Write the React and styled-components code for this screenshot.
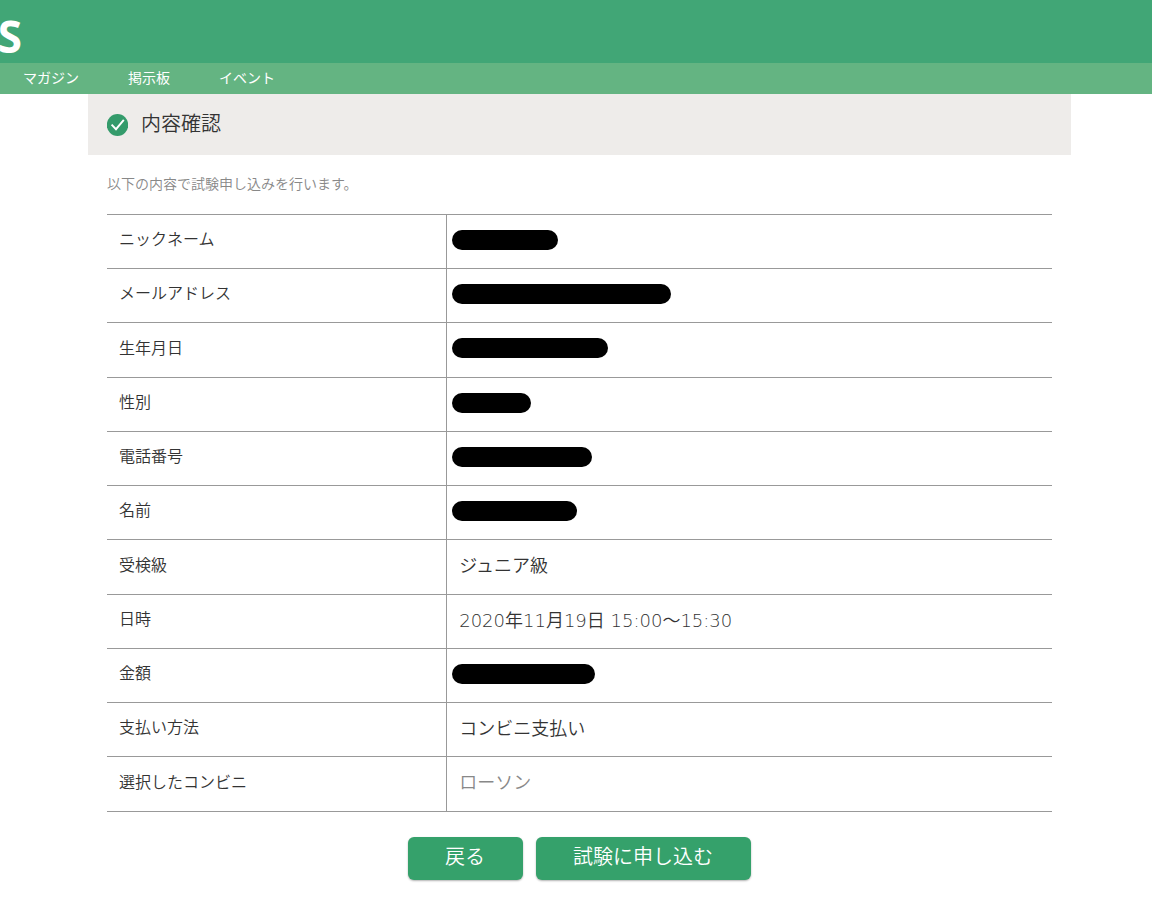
import React from 'react';
import styled, { createGlobalStyle } from 'styled-components';

const GlobalStyle = createGlobalStyle`
    * {
        box-sizing: border-box;
    }
    body {
        margin: 0;
        background: #fff;
        color: #333;
        font-family: 'Noto Sans CJK JP', sans-serif;
        font-weight: 350;
    }
`;

const Header = styled.header`
    height: 63px;
    padding-top: 12px;
    background: #41a676;
`;

const Logo = styled.a`
    display: flex;
    justify-content: flex-end;
    width: 22px;
    color: #fff;
    font: bold 44px/48px 'Open Sans', 'Noto Sans', sans-serif;
    text-decoration: none;
`;

const Nav = styled.nav`
    display: flex;
    align-items: center;
    gap: 49px;
    height: 31px;
    padding: 0 23px 4px;
    background: #64b482;
`;

const NavLink = styled.a`
    color: #fff;
    font-size: 14px;
    line-height: 24px;
    font-weight: 400;
    text-decoration: none;
`;

const Main = styled.main`
    margin: 0 81px 0 88px;
`;

const TitleBar = styled.div`
    display: flex;
    align-items: center;
    gap: 13px;
    height: 61px;
    padding: 0 19px;
    background: #eeecea;
`;

const Title = styled.h1`
    margin: 0;
    padding-bottom: 4px;
    font-size: 20px;
    line-height: 28px;
    font-weight: 350;
`;

const Content = styled.div`
    padding: 17px 19px 40px;
`;

const Lead = styled.p`
    margin: 0 0 20px;
    color: #888;
    font-size: 14px;
    line-height: 22px;
`;

const Table = styled.table`
    width: 100%;
    table-layout: fixed;
    border-spacing: 0;
    border-top: 1px solid #999;
`;

const Row = styled.tr`
    height: 54px;

    &:nth-child(4n + 3) {
        height: 55px;
    }
`;

const Label = styled.th`
    width: 36%;
    padding: 0 12px 7px;
    border-right: 1px solid #999;
    border-bottom: 1px solid #999;
    font-size: 16px;
    line-height: 24px;
    font-weight: 350;
    text-align: left;
`;

const Value = styled.td`
    padding: ${(props) => (props.$masked ? '0 5px 4px' : '0 12px 2px')};
    border-bottom: 1px solid #999;
    color: ${(props) => (props.$muted ? '#888' : '#333')};
    font-family: 'DejaVu Sans Light', 'Noto Sans CJK JP', sans-serif;
    font-size: 18px;
    line-height: 26px;
`;

const Mask = styled.div`
    height: 20px;
    border-radius: 10px;
    background: #000;
`;

const Actions = styled.div`
    display: flex;
    justify-content: center;
    gap: 13px;
    margin-top: 25px;
`;

const Button = styled.button`
    height: 43px;
    padding: 0 38px 5px 37px;
    border: 0;
    border-radius: 6px;
    background: #35a16b;
    box-shadow: 0 1px 2px rgba(0, 0, 0, 0.3);
    color: #fff;
    font: inherit;
    font-size: 20px;
    line-height: 28px;
    cursor: pointer;
`;

const links = ['マガジン', '掲示板', 'イベント'];

// rows with a mask hide personal data behind a bar of that width
const rows = [
    { label: 'ニックネーム', mask: 106 },
    { label: 'メールアドレス', mask: 219 },
    { label: '生年月日', mask: 156 },
    { label: '性別', mask: 79 },
    { label: '電話番号', mask: 140 },
    { label: '名前', mask: 125 },
    { label: '受検級', value: 'ジュニア級' },
    { label: '日時', value: '2020年11月19日 15:00～15:30' },
    { label: '金額', mask: 143 },
    { label: '支払い方法', value: 'コンビニ支払い' },
    { label: '選択したコンビニ', value: 'ローソン', muted: true },
];

const CheckIcon = () => (
    <svg width="21" height="22" viewBox="0 0 21 22" aria-hidden="true">
        <ellipse cx="10.5" cy="11" rx="10.7" ry="11" fill="#349b6b" />
        <path
            d="M4.6 10.6l4.4 4.6 7.8-9.4"
            fill="none"
            stroke="#fff"
            strokeWidth="1.9"
        />
    </svg>
);

const App = () => {
    return (
        <>
            <GlobalStyle />
            <Header>
                <Logo href="#">S</Logo>
            </Header>
            <Nav>
                {links.map((link) => (
                    <NavLink key={link} href="#">
                        {link}
                    </NavLink>
                ))}
            </Nav>
            <Main>
                <TitleBar>
                    <CheckIcon />
                    <Title>内容確認</Title>
                </TitleBar>
                <Content>
                    <Lead>以下の内容で試験申し込みを行います。</Lead>
                    <Table>
                        <tbody>
                            {rows.map((row) => (
                                <Row key={row.label}>
                                    <Label scope="row">{row.label}</Label>
                                    <Value $masked={!!row.mask} $muted={row.muted}>
                                        {row.mask ? (
                                            <Mask style={{ width: row.mask }} />
                                        ) : (
                                            row.value
                                        )}
                                    </Value>
                                </Row>
                            ))}
                        </tbody>
                    </Table>
                    <Actions>
                        <Button type="button">戻る</Button>
                        <Button type="submit">試験に申し込む</Button>
                    </Actions>
                </Content>
            </Main>
        </>
    );
};

export default App;
